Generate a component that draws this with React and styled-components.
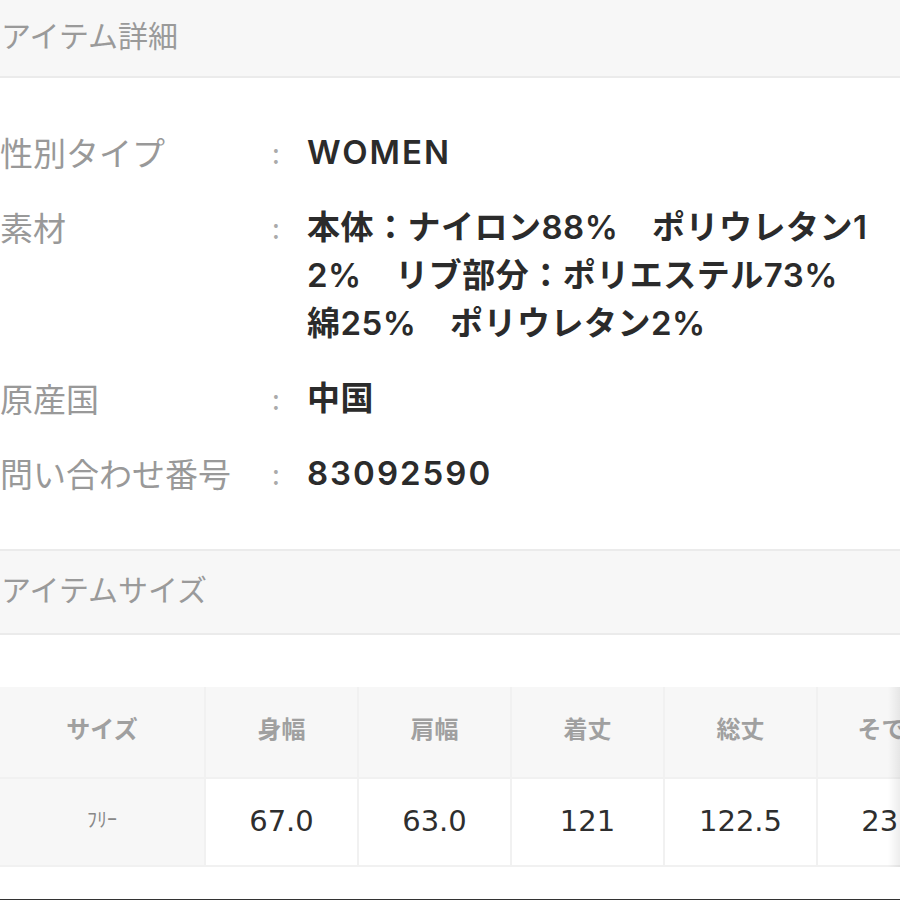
import React from "react";
import styled, { createGlobalStyle } from "styled-components";

const DETAILS = [
  { label: "性別タイプ", lines: ["WOMEN"], latin: true },
  {
    label: "素材",
    lines: [
      "本体：ナイロン88%　ポリウレタン1",
      "2%　リブ部分：ポリエステル73%",
      "綿25%　ポリウレタン2%",
    ],
  },
  { label: "原産国", lines: ["中国"] },
  { label: "問い合わせ番号", lines: ["83092590"], latin: true },
];

const SIZE_HEADS = ["サイズ", "身幅", "肩幅", "着丈", "総丈", "そで丈"];
const SIZE_ROW = { name: "ﾌﾘｰ", values: ["67.0", "63.0", "121", "122.5", "23.0"] };

const App = () => {
  return (
    <>
      <GlobalStyle />
      <Page>
        <SectionHeader $height={76}>アイテム詳細</SectionHeader>

        <DetailList>
          {DETAILS.map((item) => (
            <DetailRow key={item.label}>
              <Label>{item.label}</Label>
              <Colon>:</Colon>
              <Value $latin={item.latin}>
                {item.lines.map((line) => (
                  <Line key={line}>{line}</Line>
                ))}
              </Value>
            </DetailRow>
          ))}
        </DetailList>

        <SectionHeader $height={82} $top>
          アイテムサイズ
        </SectionHeader>

        <TableScroller>
          <SizeGrid>
            {SIZE_HEADS.map((head) => (
              <HeadCell key={head}>{head}</HeadCell>
            ))}
            <NameCell>{SIZE_ROW.name}</NameCell>
            {SIZE_ROW.values.map((value, i) => (
              <NumberCell key={i}>{value}</NumberCell>
            ))}
          </SizeGrid>
        </TableScroller>

        <BottomRule />
      </Page>
    </>
  );
};

const GlobalStyle = createGlobalStyle`
  body {
    margin: 0;
    background: #fff;
    font-family: "Noto Sans CJK JP", sans-serif;
  }
`;

const Page = styled.main`
  width: 900px;
  overflow: hidden;
`;

const SectionHeader = styled.h2`
  margin: 0;
  box-sizing: border-box;
  height: ${(props) => props.$height + (props.$top ? 4 : 2)}px;
  display: flex;
  align-items: center;
  padding: 0 0 8px 1px;
  background: #f7f7f7;
  border-top: ${(props) => (props.$top ? "2px solid #ebebeb" : "none")};
  border-bottom: 2px solid #ebebeb;
  font-size: 30px;
  font-weight: 400;
  color: #9a9a9a;
  line-height: 1;
`;

const DetailList = styled.div`
  display: flex;
  flex-direction: column;
  gap: 27px;
  padding: 50px 0 52px;
`;

const DetailRow = styled.div`
  display: grid;
  grid-template-columns: 272px 35px 1fr;
  line-height: 48px;
`;

const Label = styled.div`
  font-size: 33px;
  color: #999;
  white-space: nowrap;
`;

const Colon = styled.div`
  font-size: 28px;
  color: #aaa;
`;

const Value = styled.div`
  font-family: Inter, "Noto Sans CJK JP", sans-serif;
  font-size: 33px;
  font-weight: 600;
  letter-spacing: ${(props) => (props.$latin ? "2px" : "0.5px")};
  color: #2b2b2b;
`;

const Line = styled.div`
  white-space: nowrap;
`;

const TableScroller = styled.div`
  position: relative;
  margin-top: 52px;
  overflow: hidden;

  &::after {
    content: "";
    position: absolute;
    top: 0;
    right: 0;
    bottom: 0;
    width: 12px;
    background: linear-gradient(to right, rgba(0, 0, 0, 0), rgba(0, 0, 0, 0.07));
  }
`;

const SizeGrid = styled.div`
  display: grid;
  grid-template-columns: 204px repeat(5, 151px);
  grid-template-rows: 90px 86px;
  gap: 2px;
  width: max-content;
  padding-bottom: 2px;
  background: #f1f1f1;
`;

const Cell = styled.div`
  display: flex;
  align-items: center;
  justify-content: center;
  white-space: nowrap;
  padding-bottom: ${(props) => props.$lift || 0}px;
`;

const HeadCell = styled(Cell).attrs({ $lift: 10 })`
  background: #f7f7f7;
  font-size: 24px;
  font-weight: 700;
  color: #a0a0a0;
`;

const NameCell = styled(Cell).attrs({ $lift: 8 })`
  background: #f7f7f7;
  font-size: 20px;
  color: #888;
`;

const NumberCell = styled(Cell).attrs({ $lift: 2 })`
  background: #fff;
  font-family: "DejaVu Sans", sans-serif;
  font-size: 29px;
  color: #2e2e2e;
`;

const BottomRule = styled.hr`
  margin: 32px 0 0;
  border: none;
  height: 2px;
  background: #333;
`;

export default App;
